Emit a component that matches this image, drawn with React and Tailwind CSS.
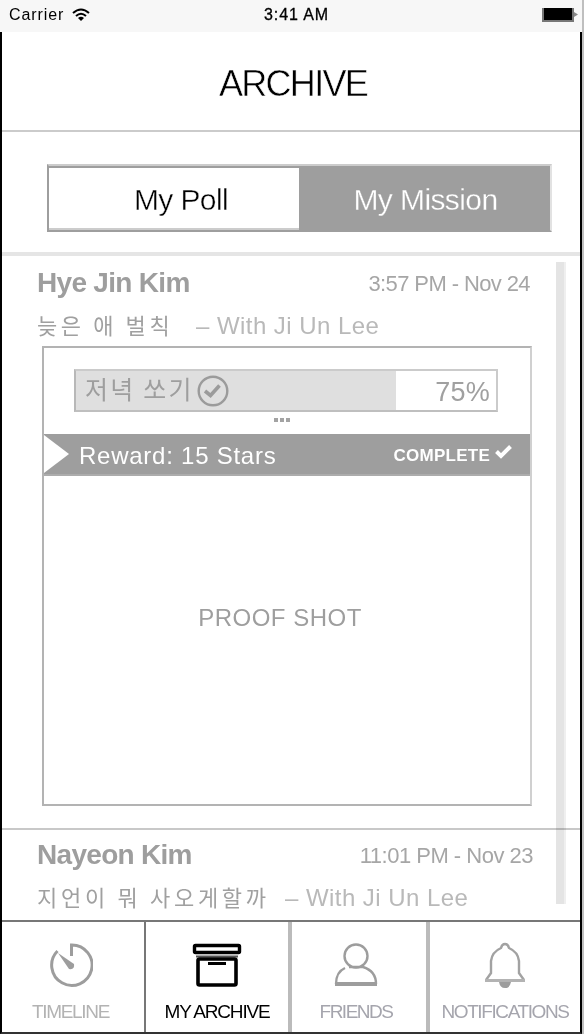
import React from "react";

function StatusBar() {
  return (
    <div className="flex h-8 shrink-0 items-start border-r-2 border-[#bfbfbf] bg-[#f7f7f7] pl-[9px] pr-1">
      <div className="flex h-[30px] flex-1 items-center gap-[8px]">
        <span className="text-[16px] tracking-[0.9px]">Carrier</span>
        <svg width="18" height="14" viewBox="0 0 18 14" fill="none" stroke="#000" strokeWidth="2">
          <path d="M1 5 Q9 -2 17 5" />
          <path d="M4 8 Q9 3.5 14 8" />
          <path d="M6 10 Q9 7.5 12 10 L9 13 Z" fill="#000" stroke="none" />
        </svg>
      </div>
      <span className="pl-[6px] text-[16px] leading-[30px] tracking-[0.9px] [-webkit-text-stroke:0.3px_#000]">3:41 AM</span>
      <div className="flex h-[30px] flex-1 items-center justify-end">
        <svg width="36" height="14" viewBox="0 0 36 14">
          <rect width="32" height="14" fill="#777" />
          <rect x="2" width="28" height="12" fill="#000" />
          <path d="M32 4 L36 6.5 L32 9Z" fill="#888" />
        </svg>
      </div>
    </div>
  );
}

function Entry({ name, time, children, companion, className, timeClass, korClass }) {
  return (
    <div className={"flex flex-col pl-[35px] " + className}>
      <div className="flex h-8 items-center justify-between">
        <span className="pt-[1px] text-[28px] font-bold tracking-[-0.7px] text-[#9e9e9e]">{name}</span>
        <span className={"pt-[4px] text-[22px] text-[#a6a6a6] " + timeClass}>{time}</span>
      </div>
      <div className="mt-[10px] flex h-8 items-center whitespace-pre">
        <span className={"font-['Noto_Sans_CJK_KR',sans-serif] text-[22px] leading-8 text-[#a0a0a0] " + korClass}>
          {children}
        </span>
        <span className="pt-[3px] text-[24px] tracking-[0.45px] text-[#b9b9b9]">{companion}</span>
      </div>
    </div>
  );
}

function MissionCard() {
  return (
    <div className="ml-10 flex h-[460px] w-[490px] flex-col border-2 border-r-[#d0d0d0] border-y-[#b3b3b3] border-l-[#b3b3b3]">
      <div className="ml-[30px] mt-[21px] flex h-[43px] w-[424px] border-2 border-[#cbcbcb] border-l-[#b8b8b8] border-b-[#bfbfbf]">
        <div className="flex w-[320px] items-center bg-[#dfdfdf] pl-[9px]">
          <span className="w-[110px] whitespace-nowrap pb-[5px] font-['Noto_Sans_CJK_KR',sans-serif] text-[25px] leading-8 tracking-[2.2px] text-[#9e9e9e]">
            저녁 쏘기
          </span>
          <svg className="ml-[2px]" width="32" height="32" viewBox="0 0 32 32" fill="none" stroke="#9b9b9b">
            <circle cx="16" cy="16" r="14.3" strokeWidth="2.4" />
            <path d="M8 16 L13.5 20.5 L22.5 10.5" strokeWidth="3.6" />
          </svg>
        </div>
        <div className="flex flex-1 items-center justify-end pr-[6px] pt-[4px] text-[27px] tracking-[0.2px] text-[#a0a0a0]">75%</div>
      </div>
      <div className="ml-[230px] mt-[6px] flex h-1 gap-[2px]">
        <i className="w-1 bg-[#a3a3a3]" />
        <i className="w-1 bg-[#a3a3a3]" />
        <i className="w-1 bg-[#a3a3a3]" />
      </div>
      <div className="mt-[12px] flex h-[42px] items-center border-b-2 border-[#acacac] bg-[#9e9e9e] text-white">
        <svg width="25" height="40" viewBox="0 0 25 40" fill="#fff">
          <path d="M0 1 L25 20 L0 39Z" />
        </svg>
        <span className="ml-[10px] flex-1 pt-[3px] text-[24px] tracking-[0.75px]">Reward: 15 Stars</span>
        <span className="pt-[3px] text-[17px] font-bold tracking-[0.25px]">COMPLETE</span>
        <svg className="mb-1 ml-[5px] mr-[18px]" width="17" height="14" viewBox="0 0 17 14" fill="none" stroke="#fff" strokeWidth="4">
          <path d="M1.5 6.5 L6 11 L15.5 1.5" />
        </svg>
      </div>
      <div className="flex flex-1 justify-center pr-[14px] pt-[126px] text-[24px] leading-8 tracking-[0.5px] text-[#9e9e9e]">PROOF SHOT</div>
    </div>
  );
}

function TimelineIcon() {
  return (
    <svg width="44" height="46" viewBox="0 0 44 46" fill="none" stroke="#9d9d9d" strokeWidth="3">
      <path d="M8.5 9 A20.2 20.2 0 1 0 22.5 3 V14" />
      <path d="M9 11 L25 22 Q26 28 20 27Z" fill="#9d9d9d" stroke="none" />
    </svg>
  );
}

function ArchiveIcon() {
  return (
    <svg width="50" height="46" viewBox="0 0 50 46" fill="none" stroke="#000">
      <rect x="2.5" y="3.5" width="45" height="7" rx="1" strokeWidth="3.4" />
      <path d="M4 14.5 H46" stroke="#555" strokeWidth="2" />
      <rect x="6" y="17" width="38" height="26" rx="1.5" strokeWidth="3.6" />
      <path d="M16 21.5 H34" strokeWidth="3" />
    </svg>
  );
}

function FriendsIcon() {
  return (
    <svg width="44" height="46" viewBox="0 0 44 46" fill="none" stroke="#9d9d9d">
      <circle cx="22" cy="14" r="11.5" strokeWidth="2.4" />
      <path d="M11 26 Q2 30 2 42 M15 25 H29 Q42 29 42 42" strokeWidth="2.4" />
      <path d="M1 42 H43" strokeWidth="4" />
    </svg>
  );
}

function BellIcon() {
  return (
    <svg width="42" height="48" viewBox="0 0 42 48" fill="none" stroke="#a2a2a2">
      <path
        d="M2 39 L7 32 V20 Q8 11 17 7 Q18 3 21 3 Q24 3 25 7 Q34 11 35 20 V32 L40 39"
        strokeWidth="2.4"
      />
      <path d="M1 39.5 H41" stroke="#b3b3b3" strokeWidth="3" />
      <path d="M15 41 H27 Q26 47 21 47 Q16 47 15 41Z" fill="#9d9d9d" stroke="none" />
    </svg>
  );
}

function NavItem({ label, className, labelClass, children }) {
  return (
    <div className={"flex shrink-0 flex-col items-center " + className}>
      <div className="flex h-[78px] items-center pt-2">{children}</div>
      <span className={"whitespace-nowrap text-[19px] leading-6 " + labelClass}>{label}</span>
    </div>
  );
}

export default function App() {
  return (
    <div className="flex h-[1034px] w-[584px] flex-col overflow-hidden bg-white font-['Liberation_Sans',Arial,sans-serif] leading-none text-black">
      <StatusBar />
      <div className="flex min-h-0 flex-1 border-r-2 border-[#bfbfbf]">
        <div className="flex min-w-0 flex-1 flex-col border-x-2 border-b-2 border-black border-b-[#333]">
          <header className="flex h-[100px] shrink-0 items-center justify-center border-b-2 border-[#cbcbcb] pl-1 pt-[6px] text-[36px] tracking-[-1.7px] [-webkit-text-stroke:0.5px_#fff]">
            ARCHIVE
          </header>
          <div className="flex h-[124px] shrink-0 border-b-4 border-[#e5e5e5] pl-[45px] pt-[32px]">
            <div className="flex h-[68px] w-[505px] border-2 border-r-[#e2e2e2] border-t-[#cccccc] border-b-[#9e9e9e] border-l-[#9e9e9e] text-[30px] tracking-[-0.6px]">
              <div className="flex flex-1 items-center justify-center border-b-2 border-[#cccccc] border-t-2 border-t-[#9e9e9e] pl-[14px] pt-1 [-webkit-text-stroke:0.4px_#fff]">My Poll</div>
              <div className="flex w-[251px] items-center justify-center bg-[#9e9e9e] pl-[2px] pt-1 text-white [-webkit-text-stroke:0.3px_#9e9e9e]">My Mission</div>
            </div>
          </div>
          <main className="flex h-[664px] shrink-0">
            <div className="flex w-[554px] flex-col pt-[10px]">
              <Entry
                name="Hye Jin Kim"
                time="3:57 PM - Nov 24"
                companion="– With Ji Un Lee"
                className="pr-[26px]"
                timeClass="tracking-[-0.6px]"
                korClass="w-[159px] tracking-[3.6px]"
              >
                늦은 애 벌칙
              </Entry>
              <div className="mt-[6px]">
                <MissionCard />
              </div>
              <div className="mt-[22px] h-[2px] w-[578px] bg-[#c8c8c8]" />
              <div className="mt-[8px]">
                <Entry
                  name="Nayeon Kim"
                  time="11:01 PM - Nov 23"
                  companion="– With Ji Un Lee"
                  className="pr-[23px]"
                  timeClass="tracking-[-0.5px]"
                  korClass="w-[248px] tracking-[3.7px]"
                >
                  지언이 뭐 사오게할까
                </Entry>
              </div>
            </div>
            <div className="mt-[6px] h-[642px] w-[10px] border-r-2 border-[#efefef] bg-[#e4e4e4] mix-blend-multiply" />
          </main>
          <nav className="flex h-[112px] shrink-0 border-t-2 border-[#777]">
            <NavItem label="TIMELINE" className="w-[142px] pr-[5px]" labelClass="tracking-[-1.3px] text-[#b3b3b3]">
              <TimelineIcon />
            </NavItem>
            <NavItem label="MY ARCHIVE" className="w-[144px] border-l-2 border-[#777]" labelClass="tracking-[-1.2px] text-black">
              <ArchiveIcon />
            </NavItem>
            <NavItem label="FRIENDS" className="w-[138px] border-l-4 border-[#bbb] pr-[6px]" labelClass="tracking-[-1.5px] text-[#a5a5ad]">
              <FriendsIcon />
            </NavItem>
            <NavItem label="NOTIFICATIONS" className="w-[154px] border-l-4 border-[#bbb]" labelClass="tracking-[-1.4px] text-[#a5a5ad]">
              <BellIcon />
            </NavItem>
          </nav>
        </div>
      </div>
    </div>
  );
}
